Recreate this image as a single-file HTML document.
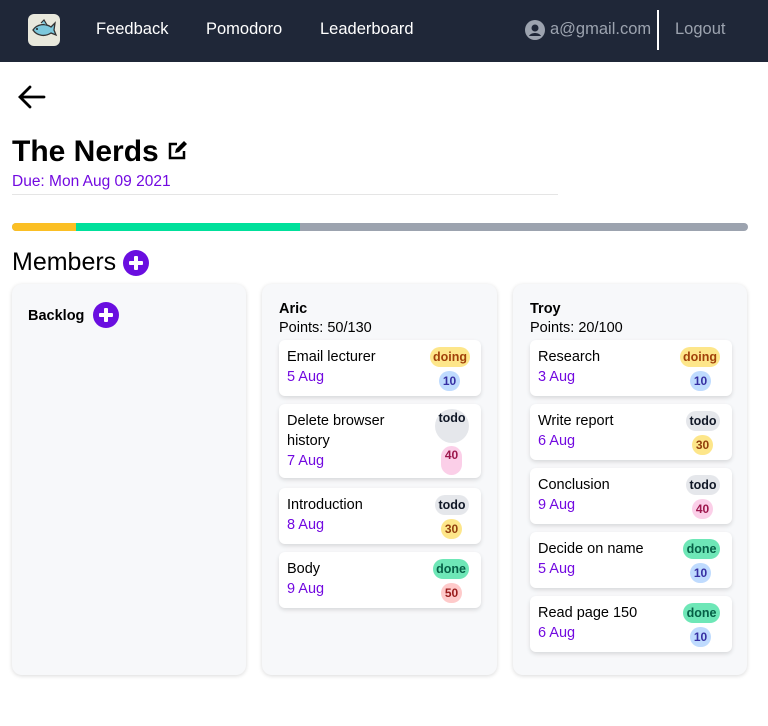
<!DOCTYPE html>
<html><head><meta charset="utf-8"><style>
*{box-sizing:border-box;margin:0;padding:0}
body{width:768px;height:726px;background:#fff;font-family:"Liberation Sans",Arial,sans-serif;position:relative;overflow:hidden;color:#000}
.nav{position:absolute;left:0;top:0;width:768px;height:62px;background:#1f2738}
.nav a{position:absolute;top:20px;color:#fff;font-size:16.5px;text-decoration:none}
.logo{position:absolute;left:28px;top:14px;width:32px;height:32px;background:#e8e8dc;border-radius:6px}
.col{position:absolute;top:284px;height:391px;background:#f7f8fa;border-radius:10px;box-shadow:0 1px 4px rgba(0,0,0,.15)}
.plus{display:inline-block;width:26px;height:26px;border-radius:50%;background:#6a0ee0;position:absolute}
.plus:before,.plus:after{content:"";position:absolute;background:#fff;border-radius:1px}
.plus:before{left:6px;top:11px;width:14px;height:4px}
.plus:after{left:11px;top:6px;width:4px;height:14px}
.task{position:absolute;left:17px;width:202px;background:#fff;border-radius:6px;box-shadow:0 2px 4px rgba(0,0,0,.13)}
.t{position:absolute;left:8px;top:7px;font-size:14.5px;line-height:20px;width:130px}
.d{color:#7209e0}
.s{position:absolute;font-size:12.5px;font-weight:bold;border-radius:10px;text-align:center;line-height:18px}
.n{position:absolute;font-size:12px;font-weight:bold;border-radius:10px;width:21px;height:20px;text-align:center;line-height:20px}
.name{position:absolute;left:17px;top:17px;font-weight:bold;font-size:14.5px}
.pts{position:absolute;left:17px;top:36px;font-size:14.5px}
</style></head><body>
<div class="nav">
<div class="logo"><svg width="32" height="32" viewBox="0 0 32 32"><path d="M5 16c4-6 12-7 18-3l4-4-1 7 2 5-5-2c-6 4-14 3-18-3z" fill="#7cc8dc" stroke="#333" stroke-width="1.3"/><path d="M13 9l3-3 3 5" fill="#7cc8dc" stroke="#333" stroke-width="1.2"/><circle cx="9" cy="15" r="1" fill="#222"/></svg></div>
<a style="left:96px">Feedback</a><a style="left:206px">Pomodoro</a><a style="left:320px">Leaderboard</a>
<svg style="position:absolute;left:525px;top:20px" width="20" height="20" viewBox="0 0 20 20"><circle cx="10" cy="10" r="10" fill="#9ca3af"/><circle cx="10" cy="8" r="3.5" fill="#1f2738"/><path d="M4 16c2-4 10-4 12 0" fill="#1f2738"/></svg>
<a style="left:550px;color:#9ca3af">a@gmail.com</a>
<div style="position:absolute;left:657px;top:10px;width:2px;height:40px;background:#fff"></div>
<a style="left:675px;color:#9ca3af">Logout</a>
</div>
<svg style="position:absolute;left:17px;top:84px" width="30" height="26" viewBox="0 0 30 26"><path d="M27 13H3M13 3L3 13l10 10" fill="none" stroke="#000" stroke-width="2.8" stroke-linecap="round"/></svg>
<div style="position:absolute;left:12px;top:135px;font-size:30px;font-weight:bold">The Nerds</div>
<svg style="position:absolute;left:167px;top:140px" width="21" height="21" viewBox="0 0 21 21"><path d="M10 4H3v14h14v-7" fill="none" stroke="#000" stroke-width="2.5"/><path d="M8 13l1-4 8-8 3 3-8 8z" fill="#000"/></svg>
<div style="position:absolute;left:12px;top:173px;font-size:15.5px;color:#7209e0">Due: Mon Aug 09 2021</div>
<div style="position:absolute;left:12px;top:194px;width:546px;height:1px;background:#e5e5e5"></div>
<div style="position:absolute;left:12px;top:223px;width:736px;height:8px;border-radius:4px;background:#9ca3af;overflow:hidden"><div style="width:64px;height:8px;background:#fbbf24;float:left"></div><div style="width:224px;height:8px;background:#00e09b;float:left"></div></div>
<div style="position:absolute;left:12px;top:248px;font-size:25px">Members</div>
<span class="plus" style="left:123px;top:250px"></span>

<div class="col" style="left:12px;width:234px"><div style="position:absolute;left:16px;top:24px;font-weight:bold;font-size:14.5px">Backlog</div><span class="plus" style="left:81px;top:18px"></span></div>

<div class="col" style="left:262px;width:235px">
<div class="name">Aric</div><div class="pts">Points: 50/130</div>
<div class="task" style="top:56px;height:56px"><div class="t">Email lecturer<br><span class="d">5 Aug</span></div><div class="s" style="left:151px;top:7px;width:40px;height:20px;background:#fde68a;color:#a1410a;line-height:20px">doing</div><div class="n" style="left:160px;top:31px;background:#bfdbfe;color:#3730a3">10</div></div>
<div class="task" style="top:120px;height:74px"><div class="t">Delete browser history<br><span class="d">7 Aug</span></div><div class="s" style="left:156px;top:5px;width:34px;height:34px;border-radius:17px;background:#e5e7eb;color:#111827">todo</div><div class="n" style="left:162px;top:42px;height:29px;border-radius:11px;background:#fbcfe8;color:#9d174d;line-height:18px">40</div></div>
<div class="task" style="top:204px;height:56px"><div class="t">Introduction<br><span class="d">8 Aug</span></div><div class="s" style="left:156px;top:7px;width:34px;height:20px;background:#e5e7eb;color:#111827;line-height:20px">todo</div><div class="n" style="left:162px;top:31px;background:#fde68a;color:#92400e">30</div></div>
<div class="task" style="top:268px;height:56px"><div class="t">Body<br><span class="d">9 Aug</span></div><div class="s" style="left:154px;top:7px;width:36px;height:20px;background:#6ee7b7;color:#065f46;line-height:20px">done</div><div class="n" style="left:162px;top:31px;background:#fecaca;color:#991b1b">50</div></div>
</div>

<div class="col" style="left:513px;width:234px">
<div class="name">Troy</div><div class="pts">Points: 20/100</div>
<div class="task" style="top:56px;height:56px"><div class="t">Research<br><span class="d">3 Aug</span></div><div class="s" style="left:150px;top:7px;width:40px;height:20px;background:#fde68a;color:#a1410a;line-height:20px">doing</div><div class="n" style="left:160px;top:31px;background:#bfdbfe;color:#3730a3">10</div></div>
<div class="task" style="top:120px;height:56px"><div class="t">Write report<br><span class="d">6 Aug</span></div><div class="s" style="left:156px;top:7px;width:34px;height:20px;background:#e5e7eb;color:#111827;line-height:20px">todo</div><div class="n" style="left:162px;top:31px;background:#fde68a;color:#92400e">30</div></div>
<div class="task" style="top:184px;height:56px"><div class="t">Conclusion<br><span class="d">9 Aug</span></div><div class="s" style="left:156px;top:7px;width:34px;height:20px;background:#e5e7eb;color:#111827;line-height:20px">todo</div><div class="n" style="left:162px;top:31px;background:#fbcfe8;color:#9d174d">40</div></div>
<div class="task" style="top:248px;height:56px"><div class="t">Decide on name<br><span class="d">5 Aug</span></div><div class="s" style="left:153px;top:7px;width:37px;height:20px;background:#6ee7b7;color:#065f46;line-height:20px">done</div><div class="n" style="left:160px;top:31px;background:#bfdbfe;color:#3730a3">10</div></div>
<div class="task" style="top:312px;height:56px"><div class="t">Read page 150<br><span class="d">6 Aug</span></div><div class="s" style="left:153px;top:7px;width:37px;height:20px;background:#6ee7b7;color:#065f46;line-height:20px">done</div><div class="n" style="left:160px;top:31px;background:#bfdbfe;color:#3730a3">10</div></div>
</div>
</body></html>
